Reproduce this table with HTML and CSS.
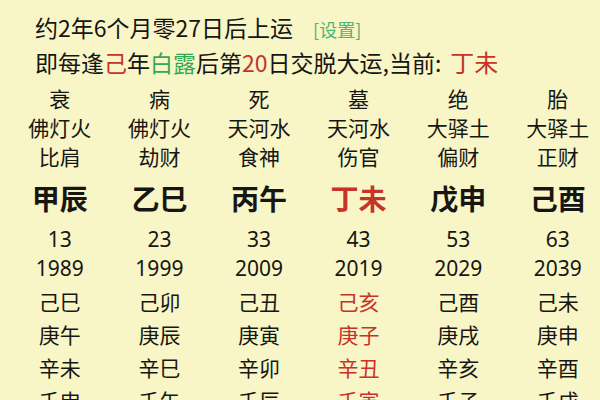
FILE: index.html
```html
<!DOCTYPE html>
<html lang="zh-CN">
<head>
<meta charset="utf-8">
<link rel="stylesheet" href="styles.css">
</head>
<body>
<div class="page">
  <div class="info">
    <div class="line1">约2年6个月零27日后上运<span class="set">[设置]</span></div>
    <div class="line2">即每逢<span class="red">己</span>年<span class="green">白露</span>后第<span class="red">20</span>日交脱大运,当前:<span class="cur">丁未</span></div>
  </div>
  <div class="table">
    <div class="row r-stage"><span>衰</span><span>病</span><span>死</span><span>墓</span><span>绝</span><span>胎</span></div>
    <div class="row r-nayin"><span>佛灯火</span><span>佛灯火</span><span>天河水</span><span>天河水</span><span>大驿土</span><span>大驿土</span></div>
    <div class="row r-god"><span>比肩</span><span>劫财</span><span>食神</span><span>伤官</span><span>偏财</span><span>正财</span></div>
    <div class="row r-pillar"><span>甲辰</span><span>乙巳</span><span>丙午</span><span class="red">丁未</span><span>戊申</span><span>己酉</span></div>
    <div class="row r-age num"><span>13</span><span>23</span><span>33</span><span>43</span><span>53</span><span>63</span></div>
    <div class="row r-year num"><span>1989</span><span>1999</span><span>2009</span><span>2019</span><span>2029</span><span>2039</span></div>
    <div class="row r-y"><span>己巳</span><span>己卯</span><span>己丑</span><span class="red">己亥</span><span>己酉</span><span>己未</span></div>
    <div class="row r-y"><span>庚午</span><span>庚辰</span><span>庚寅</span><span class="red">庚子</span><span>庚戌</span><span>庚申</span></div>
    <div class="row r-y"><span>辛未</span><span>辛巳</span><span>辛卯</span><span class="red">辛丑</span><span>辛亥</span><span>辛酉</span></div>
    <div class="row r-y"><span>壬申</span><span>壬午</span><span>壬辰</span><span class="red">壬寅</span><span>壬子</span><span>壬戌</span></div>
  </div>
</div>
</body>
</html>
```
FILE: styles.css
```css
html, body {
  margin: 0;
  padding: 0;
  background: #f8f5c7;
  overflow: hidden;
}
.page {
  width: 600px;
  height: 400px;
  overflow: hidden;
  font-family: "Noto Sans CJK SC", "Noto Sans", sans-serif;
  color: #161613;
}
.info {
  padding: 10px 0 0 35px;
  font-size: 23px;
}
.line1, .line2 {
  height: 35px;
  line-height: 35px;
  white-space: nowrap;
}
.line1 span, .line2 span {
  line-height: 1;
}
.set {
  color: #4fb374;
  font-size: 18px;
  margin-left: 20px;
}
.red { color: #c6332a; }
.green { color: #34a853; }
.cur {
  color: #c6332a;
  font-size: 24px;
  margin-left: 9px;
}
.table {
  margin-left: 10px;
  margin-top: 3px;
  font-size: 21px;
}
.row {
  display: grid;
  grid-template-columns: repeat(6, 99.6px);
  text-align: center;
  white-space: nowrap;
}
.r-stage { line-height: 30px; }
.r-nayin { line-height: 29px; }
.r-god { line-height: 29px; }
.r-pillar {
  line-height: 55px;
  font-size: 28px;
  font-weight: bold;
}
.r-age { line-height: 26px; }
.r-year { line-height: 33px; }
.r-y { line-height: 33px; }
.num { font-family: "Noto Sans", "Roboto", sans-serif; font-size: 21px; }
```
